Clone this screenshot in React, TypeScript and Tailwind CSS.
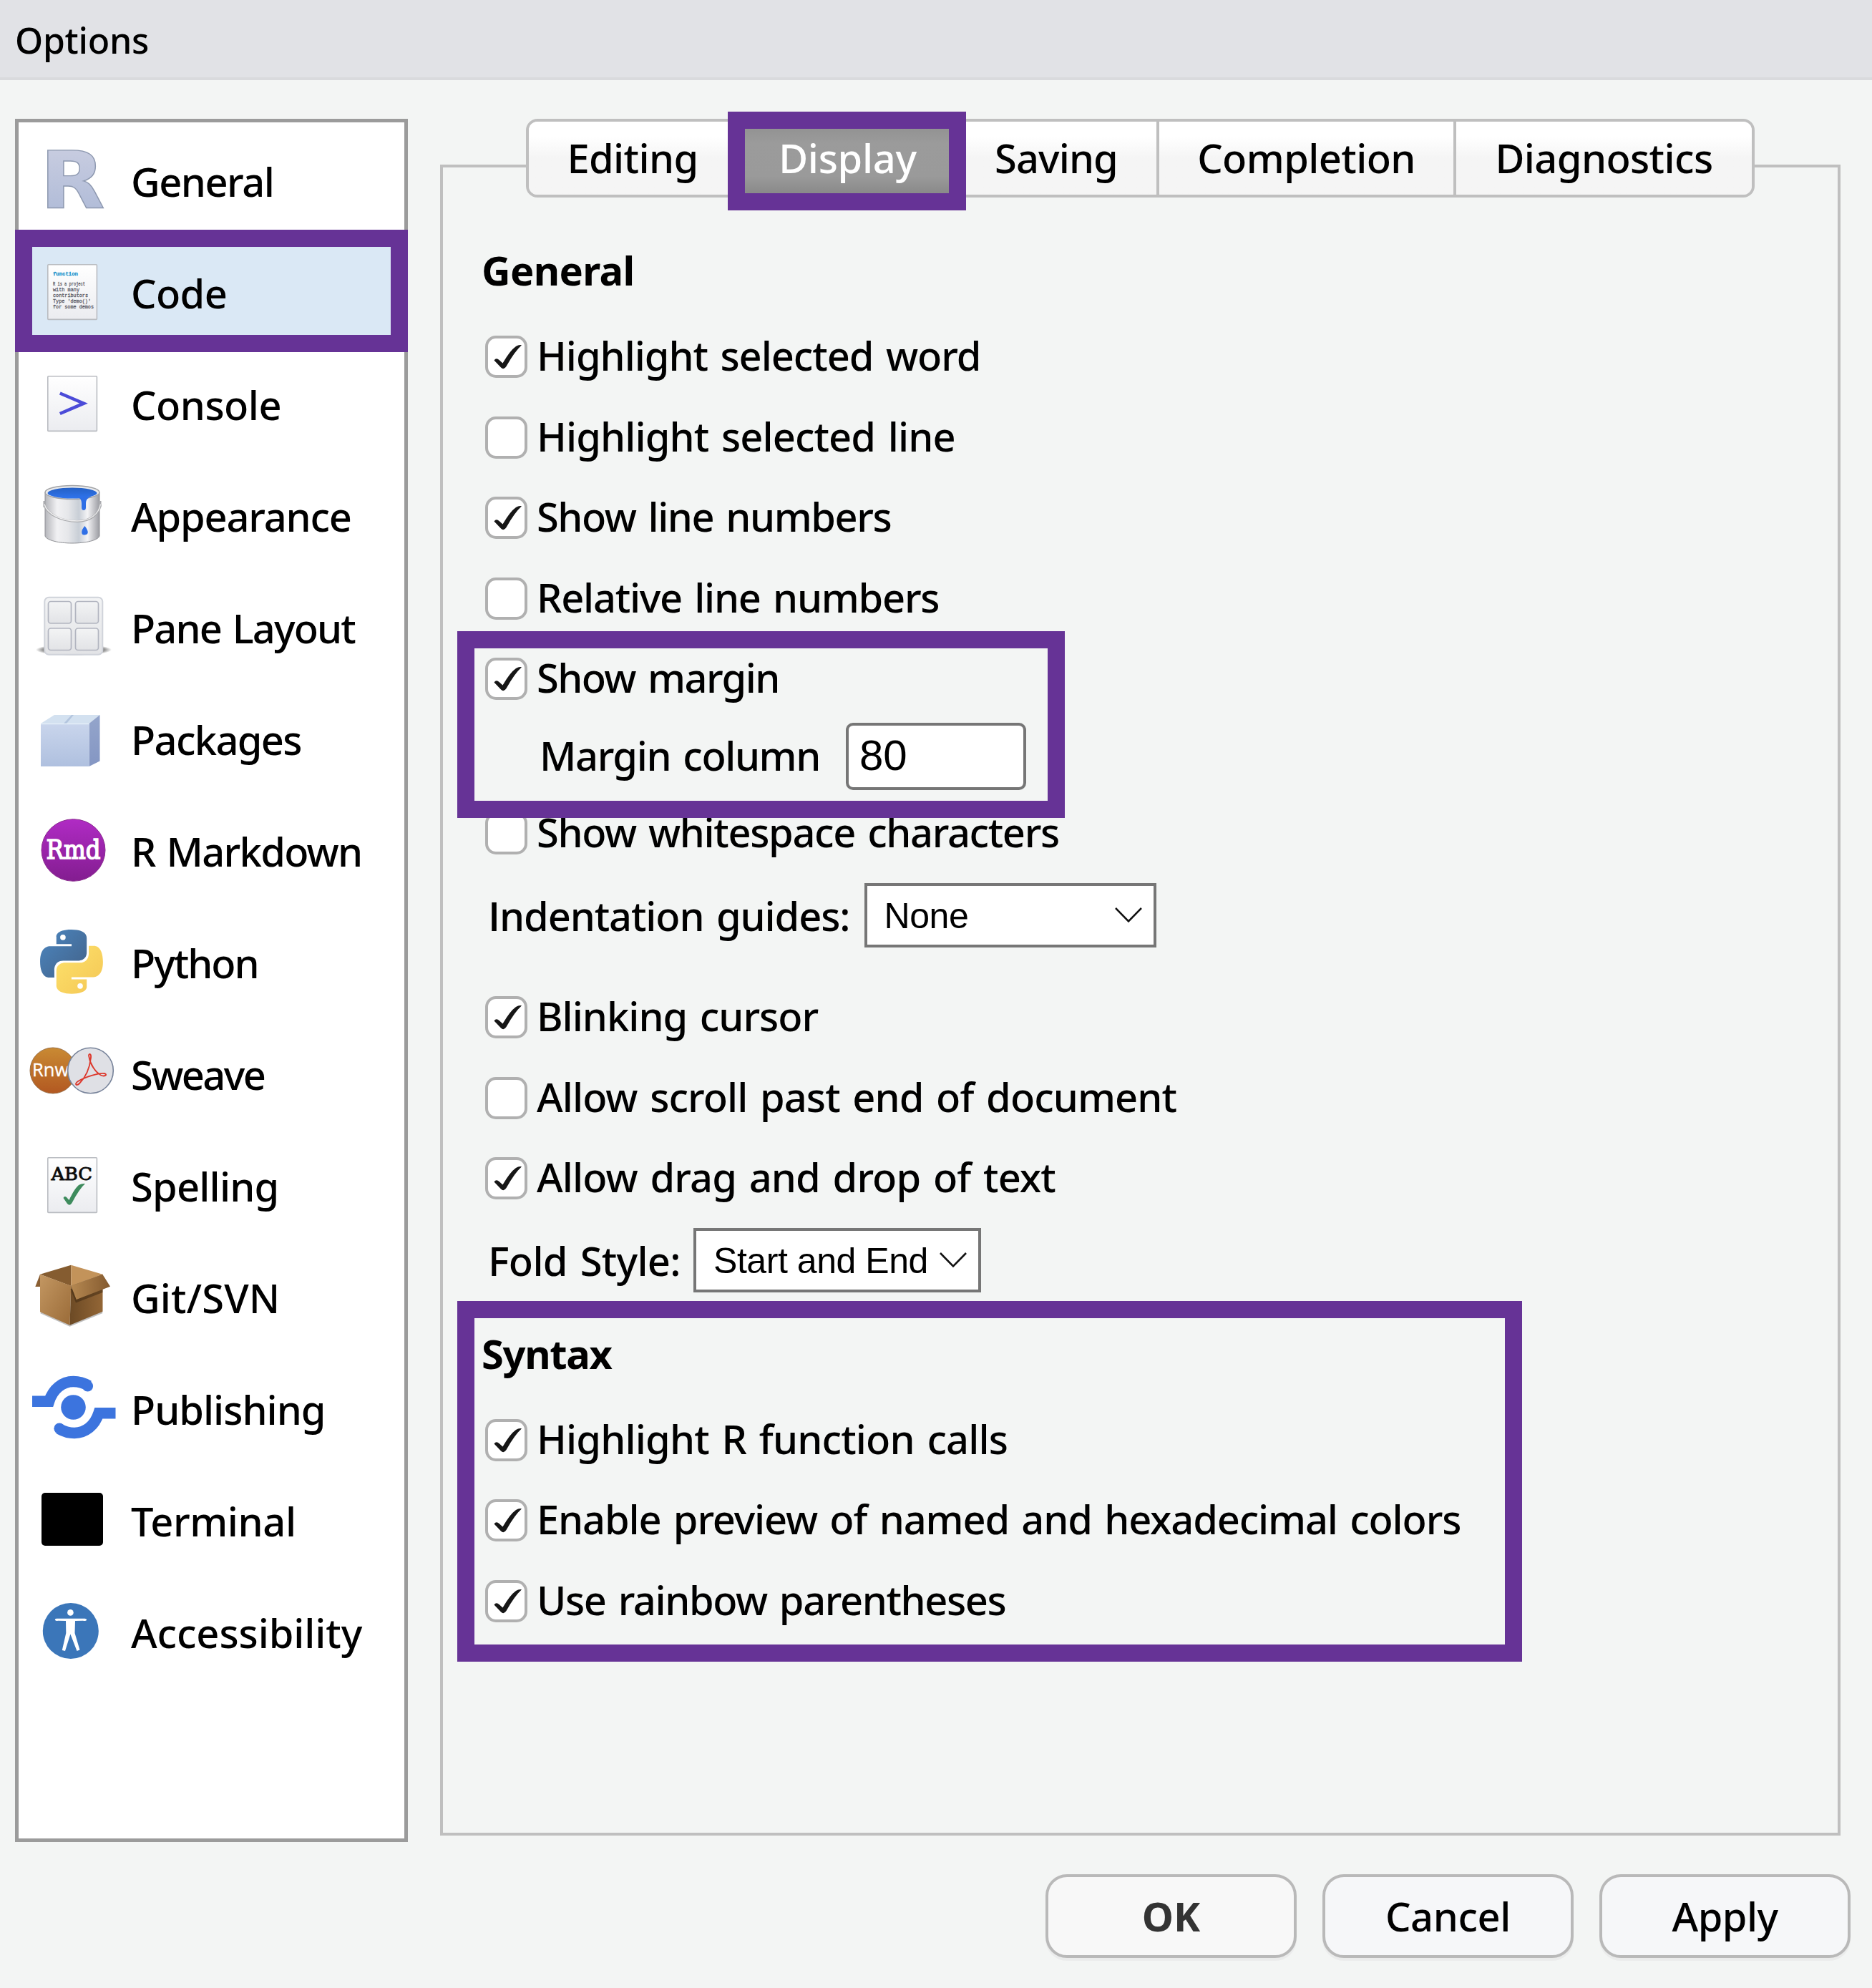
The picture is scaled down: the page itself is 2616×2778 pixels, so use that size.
import type { ReactNode } from "react";

function Sheet({ id, children }: { id: string; children: ReactNode }) {
  return (
    <>
      <defs>
        <linearGradient id={id} x1="0" y1="0" x2="0" y2="1">
          <stop offset="0" stopColor="#ffffff" />
          <stop offset="1" stopColor="#ebecf0" />
        </linearGradient>
      </defs>
      <rect x="26.8" y="8.8" width="68.6" height="76.6" rx="1" fill={`url(#${id})`} stroke="#b9bcc1" strokeWidth="1.6" />
      {children}
    </>
  );
}

const codeLines: [string, number, number][] = [
  ["R is a project", 38, 45],
  ["with many", 46, 37],
  ["contributors", 54, 49],
  ["Type 'demo()'", 62, 53],
  ["for some demos", 70, 57],
];

const icons: Record<string, ReactNode> = {
  General: (
    <>
      <defs>
        <linearGradient id="rFill" x1="0" y1="0" x2="0" y2="1">
          <stop offset="0" stopColor="#cdd0e2" />
          <stop offset="1" stopColor="#abb8d6" />
        </linearGradient>
      </defs>
      <text transform="translate(16 85.5) scale(1.07 1)" fontFamily="DejaVu Sans" fontWeight="700" fontSize="110" fill="url(#rFill)" stroke="#8e99b0" strokeWidth="1.4">
        R
      </text>
    </>
  ),
  Code: (
    <Sheet id="codeSheet">
      <text x="34" y="24" fontFamily="Liberation Mono" fontWeight="700" fontSize="7.5" textLength="35" lengthAdjust="spacingAndGlyphs" fill="#1b93cc" stroke="#1b93cc" strokeWidth="0.3">
        function
      </text>
      {codeLines.map(([t, y, w]) => (
        <text key={t} x="34" y={y} fontFamily="Liberation Mono" fontSize="7.5" textLength={w} lengthAdjust="spacingAndGlyphs" fill="#5d5d68" stroke="#5d5d68" strokeWidth="0.3">
          {t}
        </text>
      ))}
    </Sheet>
  ),
  Console: (
    <Sheet id="consoleSheet">
      <path d="M43.8 32.5 77 46.7 43.8 61" fill="none" stroke="#4b4bd8" strokeWidth="4.6" />
    </Sheet>
  ),
  Appearance: (
    <>
      <defs>
        <linearGradient id="canBody" x1="0" y1="0" x2="1" y2="0">
          <stop offset="0" stopColor="#b4b5ba" />
          <stop offset="0.22" stopColor="#f1f1f3" />
          <stop offset="0.42" stopColor="#e6e7ea" />
          <stop offset="0.62" stopColor="#c8ced6" />
          <stop offset="0.78" stopColor="#f4f4f6" />
          <stop offset="1" stopColor="#9b9ca2" />
        </linearGradient>
        <linearGradient id="canPaint" x1="0" y1="0" x2="0" y2="1">
          <stop offset="0" stopColor="#2560c4" />
          <stop offset="1" stopColor="#2f74ee" />
        </linearGradient>
      </defs>
      <path d="M23 15V76C25 82 42 86 61 86S97 82 99 76V15Z" fill="url(#canBody)" stroke="#8f9095" strokeWidth="1" />
      <ellipse cx="61" cy="15" rx="38" ry="9.5" fill="#e9eaec" stroke="#a2a3a6" strokeWidth="1.4" />
      <ellipse cx="61" cy="16" rx="34.5" ry="7.5" fill="url(#canPaint)" />
      <path d="M69 22Q74 24 74 30V36Q74 40 77 40T80 36V30Q80 23 88 21Z" fill="#2f6fe6" />
      <path d="M78.500 62Q83 68 82.800 71T78.500 74.500 74.200 71 78.500 62Z" fill="#2f6fe6" />
      <rect x="20.500" y="27" width="3.500" height="9" fill="#a9aaae" />
      <rect x="98" y="27" width="3.500" height="9" fill="#a9aaae" />
      <path d="M22 32C26 46 46 55.500 68 55.500 86 55.500 98 46 100.500 32" fill="none" stroke="#a8a9ac" strokeWidth="3" />
      <path d="M22 31.500C26 45.500 46 55 68 55 86 55 98 45.500 100.500 31.500" fill="none" stroke="#ededee" strokeWidth="1.400" />
    </>
  ),
  "Pane Layout": (
    <>
      <defs>
        <radialGradient id="paneShadow">
          <stop offset="0" stopColor="#000" stopOpacity="0.6" />
          <stop offset="0.8" stopColor="#000" stopOpacity="0.45" />
          <stop offset="1" stopColor="#000" stopOpacity="0" />
        </radialGradient>
        <linearGradient id="paneFill" x1="0" y1="0" x2="0" y2="1">
          <stop offset="0" stopColor="#f3f4f5" />
          <stop offset="1" stopColor="#e2e3e6" />
        </linearGradient>
      </defs>
      <ellipse cx="63" cy="79" rx="53" ry="8" fill="url(#paneShadow)" />
      <rect x="22.300" y="5.700" width="81" height="80" rx="6" fill="url(#paneFill)" stroke="#d0d3da" strokeWidth="2" />
      {[
        [27.5, 11.5],
        [65.500, 11.5],
        [27.5, 49],
        [65.500, 49],
      ].map(([x, y]) => (
        <rect key={`${x}-${y}`} x={x} y={y} width="32" height="30.500" rx="3.500" fill="url(#paneFill)" stroke="#b2b5c0" strokeWidth="1.700" />
      ))}
    </>
  ),
  Packages: (
    <>
      <defs>
        <linearGradient id="boxFront" x1="0" y1="0" x2="0" y2="1">
          <stop offset="0" stopColor="#c9d5ec" />
          <stop offset="1" stopColor="#afc0df" />
        </linearGradient>
        <linearGradient id="boxSide" x1="0" y1="0" x2="0" y2="1">
          <stop offset="0" stopColor="#94a5cb" />
          <stop offset="1" stopColor="#8496c3" />
        </linearGradient>
      </defs>
      <path d="M17 26 36 14H99.500L84.500 26Z" fill="#d3e1f0" />
      <path d="M49 26 60 14H63L53 26Z" fill="#b3c5de" />
      <path d="M84.500 26 99.500 14V78.500L84.500 86Z" fill="url(#boxSide)" />
      <path d="M17 26H84.500V86H17Z" fill="url(#boxFront)" />
      <path d="M17 26.500H84.500" stroke="#e4edf8" strokeWidth="1.500" />
    </>
  ),
  "R Markdown": (
    <>
      <defs>
        <linearGradient id="rmdFill" x1="0" y1="0" x2="0" y2="1">
          <stop offset="0" stopColor="#b02bc4" />
          <stop offset="1" stopColor="#831d90" />
        </linearGradient>
      </defs>
      <ellipse cx="62.500" cy="47" rx="44.500" ry="43.300" fill="url(#rmdFill)" stroke="#8a2b8f" strokeWidth="1" />
      <text x="24.500" y="58.500" fontFamily="DejaVu Serif" fontSize="37" textLength="76" lengthAdjust="spacingAndGlyphs" fill="#fff" stroke="#fff" strokeWidth="1.600">
        Rmd
      </text>
    </>
  ),
  Python: (
    <g transform="translate(16 2) scale(0.344 0.353)">
      <defs>
        <linearGradient id="pyBlue" x1="0" y1="0" x2="1" y2="1">
          <stop offset="0.2" stopColor="#4a7fb5" />
          <stop offset="0.9" stopColor="#43658d" />
        </linearGradient>
        <linearGradient id="pyYellow" x1="0" y1="0" x2="1" y2="1">
          <stop offset="0" stopColor="#fde26c" />
          <stop offset="0.9" stopColor="#f5c957" />
        </linearGradient>
      </defs>
      <path
        fill="url(#pyBlue)"
        d="M126.916.072c-64.832 0-60.784 28.115-60.784 28.115l.072 29.128h61.868v8.745H41.631S.145 61.355.145 126.77c0 65.417 36.21 63.097 36.21 63.097h21.61v-30.356s-1.165-36.21 35.632-36.21h61.362s34.475.557 34.475-33.319V33.97S194.67.072 126.916.072zM92.802 19.66a11.12 11.12 0 0 1 11.13 11.13 11.12 11.12 0 0 1-11.13 11.13 11.12 11.12 0 0 1-11.13-11.13 11.12 11.12 0 0 1 11.13-11.13z"
      />
      <path
        fill="url(#pyYellow)"
        d="M128.757 254.126c64.832 0 60.784-28.115 60.784-28.115l-.072-29.127H127.6v-8.745h86.441s41.486 4.705 41.486-60.712c0-65.416-36.21-63.096-36.21-63.096h-21.61v30.355s1.165 36.21-35.632 36.21h-61.362s-34.475-.557-34.475 33.32v56.013s-5.235 33.897 62.518 33.897zm34.114-19.586a11.12 11.12 0 0 1-11.13-11.13 11.12 11.12 0 0 1 11.13-11.131 11.12 11.12 0 0 1 11.13 11.13 11.12 11.12 0 0 1-11.13 11.13z"
      />
    </g>
  ),
  Sweave: (
    <>
      <defs>
        <linearGradient id="rnwFill" x1="0" y1="0" x2="0" y2="1">
          <stop offset="0" stopColor="#c98a33" />
          <stop offset="1" stopColor="#b25821" />
        </linearGradient>
      </defs>
      <circle cx="34" cy="43" r="32" fill="url(#rnwFill)" stroke="#9a7048" strokeWidth="1" />
      <text x="5" y="51" fontFamily="Open Sans" fontSize="25.500" fill="#fff" stroke="#fff" strokeWidth="0.3">
        Rnw
      </text>
      <circle cx="86.500" cy="43" r="31.800" fill="#dfe0e5" stroke="#77839a" strokeWidth="1.600" />
      <path
        d="M84.500 24C82.500 19 88 18 87 25 85.500 38 80 52 71 61 66.500 65.500 63.500 61.500 69 58 79 52 98 46 106 47 111 49 106 52 101 49.500 93 45 86 34 84.500 24Z"
        fill="none"
        stroke="#dc3a2e"
        strokeWidth="1.900"
      />
    </>
  ),
  Spelling: (
    <Sheet id="spellSheet">
      <text x="31.500" y="40" fontFamily="DejaVu Serif" fontSize="25" textLength="57.500" lengthAdjust="spacingAndGlyphs" fill="#0b0b0b" stroke="#0b0b0b" strokeWidth="0.9">
        ABC
      </text>
      <path d="M48.500 65Q50 61.500 53 64L56.500 68Q65 50 71 46.500 74 44.500 79 45 71 52 60.500 72 57.500 77 54 73Z" fill="#3e8b5d" />
    </Sheet>
  ),
  "Git/SVN": (
    <>
      <defs>
        <linearGradient id="gitLeft" x1="0" y1="0" x2="1" y2="1">
          <stop offset="0" stopColor="#c39762" />
          <stop offset="1" stopColor="#9a6b38" />
        </linearGradient>
        <linearGradient id="gitRight" x1="0" y1="0" x2="1" y2="0">
          <stop offset="0" stopColor="#6c4a25" />
          <stop offset="1" stopColor="#936636" />
        </linearGradient>
        <linearGradient id="gitFlap" x1="0" y1="0" x2="1" y2="0">
          <stop offset="0" stopColor="#b58851" />
          <stop offset="1" stopColor="#845a2f" />
        </linearGradient>
      </defs>
      <path d="M17 69 57.500 87 103 68.500" fill="none" stroke="#000" strokeOpacity="0.25" strokeWidth="3" />
      <path d="M16 15.700 9.300 33H16Z" fill="#8a5f33" />
      <path d="M16 15.700 59.300 2.700V32Z" fill="#855c30" />
      <path d="M59.300 2.700 103.300 15.700 59.300 32Z" fill="#c3935a" />
      <path d="M16 15.700 59.300 31.700 57.500 86.700 16 68.300Z" fill="url(#gitLeft)" />
      <path d="M59.300 31.700 103.500 15.700V67.700L57.500 86.700Z" fill="url(#gitRight)" />
      <path d="M58.500 36 66 55.500 103.500 41V37Z" fill="#3f2a12" fillOpacity="0.55" />
      <path d="M59.300 31.700 103.300 15.700 114 32.700 66.700 51Z" fill="url(#gitFlap)" />
    </>
  ),
  Publishing: (
    <>
      <circle cx="62.500" cy="45.500" r="17.300" fill="#3c74de" />
      <path d="M5 37.300H28.500C34 20 47 9.500 62.500 9.500 71 9.500 78 12 84 15.500" fill="none" stroke="#3c74de" strokeWidth="15.500" />
      <circle cx="82.500" cy="15.800" r="7.600" fill="#3c74de" />
      <path d="M121.500 53.700H98C92.500 71 79.500 81.500 64 81.500 55.500 81.500 48.500 79 42.500 75.500" fill="none" stroke="#3c74de" strokeWidth="15.500" />
      <circle cx="43" cy="75.200" r="7.600" fill="#3c74de" />
    </>
  ),
  Terminal: <rect x="18" y="9" width="86" height="74" rx="5" fill="#000" />,
  Accessibility: (
    <>
      <circle cx="58.800" cy="46" r="39" fill="#3b76b9" />
      <circle cx="58.400" cy="20.400" r="4.300" fill="#fff" />
      <path d="M39 28.700H78.500Q81.500 29 81 31 80 32.500 76 31.700L65 32 64.500 49 71.500 72.500 67.500 74 58.400 50.500 51 74 46.800 73 52.300 49 52 32 41 31.700Q37.500 32.500 36.800 30.500 36.800 28.700 39 28.700Z" fill="#fff" />
    </>
  ),
};

const sections: [string, string][] = [
  ["General", "tracking-[-1.5px]"],
  ["Code", "tracking-[-0.6px]"],
  ["Console", "tracking-[-0.5px]"],
  ["Appearance", "tracking-[-1.2px]"],
  ["Pane Layout", "tracking-[-1.85px]"],
  ["Packages", "tracking-[-1.65px]"],
  ["R Markdown", "tracking-[-1.7px]"],
  ["Python", "tracking-[-2px]"],
  ["Sweave", "tracking-[-2.6px]"],
  ["Spelling", "tracking-[-0.8px]"],
  ["Git/SVN", "tracking-[0.1px]"],
  ["Publishing", "tracking-[-1px]"],
  ["Terminal", "tracking-[-0.4px]"],
  ["Accessibility", "tracking-[-0.1px]"],
];

const tabs: [string, string][] = [
  ["Editing", "w-[294px] border-r-4 tracking-[-0.6px] rounded-l-[12px] bg-linear-to-b from-white from-20% via-[#f5f5f5] via-50% to-[#f5f5f5]"],
  ["Display", "w-[303px] tracking-[-0.3px] text-white bg-[linear-gradient(#8f8f8f,#9b9b9b_30%,#9a9a9a_75%,#888888)]"],
  ["Saving", "w-[284px] border-r-4 tracking-[-0.92px] bg-linear-to-b from-white from-20% via-[#f5f5f5] via-50% to-[#f5f5f5]"],
  ["Completion", "w-[415px] border-r-4 tracking-[-0.6px] bg-linear-to-b from-white from-20% via-[#f5f5f5] via-50% to-[#f5f5f5]"],
  ["Diagnostics", "w-[413px] tracking-[-0.6px] rounded-r-[12px] bg-linear-to-b from-white from-20% via-[#f5f5f5] via-50% to-[#f5f5f5]"],
];

function Check({ label, track, on }: { label: string; track: string; on?: boolean }) {
  return (
    <div className="flex h-[112.5px] items-center pl-1.5">
      <span className="h-[59px] w-[59px] shrink-0 rounded-[15px] border-4 border-[#b0b0b0] bg-white">
        {on && (
          <svg viewBox="4 4 51 51" className="h-[51px] w-[51px]">
            <path d="M12.500 34.500Q15.500 30.500 19.500 34L24.500 38.500Q35 20.500 43 15 47 12.500 51 13.300 41 22.500 29.500 43 26 48.500 22 44.500Z" fill="#161616" />
          </svg>
        )}
      </span>
      <span className={`ml-[13px] pb-[5px] whitespace-pre [word-spacing:4px] ${track}`}>{label}</span>
    </div>
  );
}

function Chevron() {
  return (
    <svg viewBox="0 0 38 22" className="h-[22px] w-[38px] shrink-0">
      <path d="M1 1 19 19.500 37 1" fill="none" stroke="#111" strokeWidth="2.600" />
    </svg>
  );
}

export default function App() {
  return (
    <div className="relative flex h-[2778px] w-[2616px] flex-col bg-[#f3f5f4] font-['Noto_Sans',sans-serif] text-[56px] leading-[80px] font-medium text-black">
      <header className="flex h-[112px] items-center border-b-4 border-[#d9dadd] bg-[#e1e2e6] pl-[21px] text-[50px] tracking-[-0.29px]">
        <span className="pt-1">Options</span>
      </header>

      <div className="flex pt-[54px] pl-[21px]">
        <nav className="h-[2408px] w-[549px] border-[5px] border-[#9b9b9b] bg-white pt-1">
          {sections.map(([name, track]) => (
            <div key={name} className={`flex h-[156px] items-center pl-3.5 ${name === "Code" ? "bg-[#dae8f5]" : ""}`}>
              <svg viewBox="0 -2 124 100" className="h-[100px] w-[124px] shrink-0 overflow-visible">
                {icons[name]}
              </svg>
              <span className={`ml-[19px] whitespace-pre [word-spacing:3px] ${track}`}>{name}</span>
            </div>
          ))}
        </nav>

        <main className="ml-[45px] w-[1957px]">
          <div className="relative z-10 ml-[120px] flex h-[110px] w-[1717px] rounded-[16px] border-4 border-[#bfbfbf]">
            {tabs.map(([name, cls]) => (
              <div key={name} className={`flex items-center justify-center border-[#bfbfbf] pb-[3px] ${cls}`}>
                {name}
              </div>
            ))}
          </div>

          <section className="-mt-[46px] flex h-[2335px] flex-col border-4 border-[#bfbfbf] pt-[103px] pl-[53px]">
            <h2 className="h-20 pl-px font-bold tracking-[-0.64px]">General</h2>
            <div className="mt-[25.25px]">
              <Check on label="Highlight selected word" track="tracking-[-1.05px]" />
              <Check label="Highlight selected line" track="tracking-[-0.9px]" />
              <Check on label="Show line numbers" track="tracking-[-1.45px]" />
              <Check label="Relative line numbers" track="tracking-[-1.25px]" />
              <Check on label="Show margin" track="tracking-[-1.55px]" />
            </div>
            <div className="flex h-[103.5px] items-center pl-[82px]">
              <span className="w-[428px] pb-[3px] tracking-[-1.4px] [word-spacing:4px]">Margin column</span>
              <div className="flex h-[94px] w-[252px] items-center rounded-[10px] border-4 border-[#767676] bg-white pb-px pl-[15px] font-['Liberation_Sans',sans-serif] text-[60px] font-normal">
                80
              </div>
            </div>
            <Check label="Show whitespace characters" track="tracking-[-1.36px]" />
            <div className="flex h-[117px] items-center pl-2.5">
              <span className="block w-[525.5px] pb-px tracking-[-1.1px] [word-spacing:4px] first-letter:font-['Open_Sans'] first-letter:font-semibold">Indentation guides:</span>
              <div className="flex h-[90px] w-[408px] items-center justify-between border-4 border-[#767676] bg-white pr-4 pl-6 font-['Liberation_Sans',sans-serif] text-[50px] font-normal">
                <span className="pt-0.5 tracking-[-0.4px]">None</span>
                <Chevron />
              </div>
            </div>
            <div className="mt-[27.5px]">
              <Check on label="Blinking cursor" track="tracking-[-1px]" />
              <Check label="Allow scroll past end of document" track="tracking-[-0.93px]" />
              <Check on label="Allow drag and drop of text" track="tracking-[-0.88px]" />
            </div>
            <div className="flex h-[117px] items-center pl-2.5">
              <span className="w-[287px] pb-px tracking-[-0.7px] [word-spacing:4px]">Fold Style:</span>
              <div className="flex h-[90px] w-[402px] items-center justify-between border-4 border-[#767676] bg-white pr-4 pl-6 font-['Liberation_Sans',sans-serif] text-[50px] font-normal">
                <span className="w-[299px] overflow-hidden pt-0.5 tracking-[-0.45px] whitespace-nowrap">Start and End</span>
                <Chevron />
              </div>
            </div>
            <h2 className="mt-[31px] h-20 pl-px font-bold tracking-[-1.3px]">Syntax</h2>
            <div className="mt-[25.25px]">
              <Check on label="Highlight R function calls" track="tracking-[-0.84px]" />
              <Check on label="Enable preview of named and hexadecimal colors" track="tracking-[-1.15px]" />
              <Check on label="Use rainbow parentheses" track="tracking-[-1.4px]" />
            </div>
          </section>
        </main>
      </div>

      <footer className="mt-[45px] mr-[30px] flex justify-end gap-9">
        <button className="h-[117px] w-[351px] rounded-[30px] border-4 border-[#b9b9b9] bg-[#f8f8f8] pb-px font-bold text-[#333333] shadow-[0_4px_0_#ebecec]">OK</button>
        <button className="h-[117px] w-[351px] rounded-[30px] border-4 border-[#b9b9b9] bg-[#f6f7f9] pb-px tracking-[-0.4px] shadow-[0_4px_0_#ebecec]">Cancel</button>
        <button className="h-[117px] w-[351px] rounded-[30px] border-4 border-[#b9b9b9] bg-[#f6f7f9] pb-px tracking-[-0.6px] shadow-[0_4px_0_#ebecec]">Apply</button>
      </footer>

      {/* Callout frames */}
      <div className="absolute top-[321px] left-[21px] h-[171px] w-[549px] border-[24px] border-[#663396]" />
      <div className="absolute top-[156px] left-[1017px] z-20 h-[138px] w-[333px] border-[24px] border-[#663396]" />
      <div className="absolute top-[882px] left-[639px] h-[261px] w-[849px] border-[24px] border-[#663396]" />
      <div className="absolute top-[1818px] left-[639px] h-[504px] w-[1488px] border-[24px] border-[#663396]" />
    </div>
  );
}
